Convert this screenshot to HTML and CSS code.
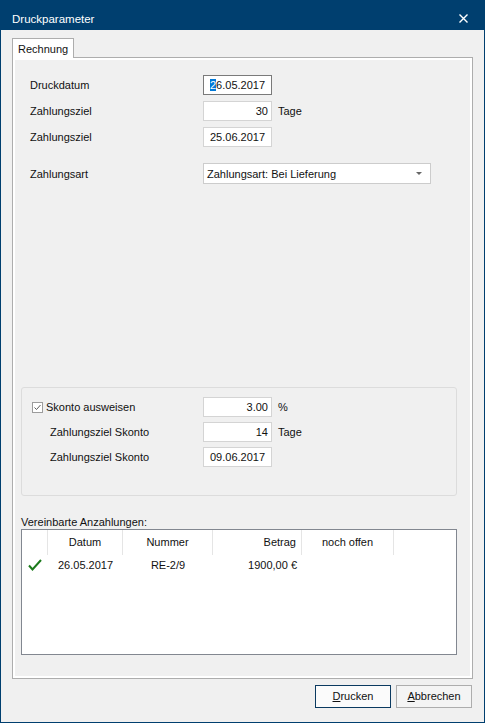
FILE: index.html
```html
<!DOCTYPE html>
<html lang="de">

<head>
    <meta charset="UTF-8">
    <meta name="viewport" content="width=device-width, initial-scale=1.0">
    <title>Druckparameter</title>
    <link rel="stylesheet" href="styles.css">
</head>

<body>
    <div class="window">
        <div class="titlebar">
            <span class="title">Druckparameter</span>
            <svg class="close" width="9" height="9" viewBox="0 0 9 9">
                <path d="M0.5 0.5 L8.5 8.5 M8.5 0.5 L0.5 8.5" stroke="#fff" stroke-width="1.4" fill="none" />
            </svg>
        </div>

        <div class="client">
            <div class="tabstrip">
                <div class="tab">Rechnung</div>
            </div>

            <div class="tabpage">
                <div class="form">
                    <span class="label">Druckdatum</span>
                    <div class="box date focus"><span class="sel">2</span>6.05.2017</div>
                    <span></span>

                    <span class="label">Zahlungsziel</span>
                    <div class="box num">30</div>
                    <span class="unit">Tage</span>

                    <span class="label">Zahlungsziel</span>
                    <div class="box date">25.06.2017</div>
                    <span></span>
                </div>

                <div class="combo-row">
                    <span class="label combo-label">Zahlungsart</span>
                    <div class="combo">
                        <span>Zahlungsart: Bei Lieferung</span>
                        <span class="arrow"></span>
                    </div>
                </div>

                <div class="spacer"></div>

                <div class="group">
                    <span class="check-label">
                        <svg class="checkbox" width="11" height="11" viewBox="0 0 11 11">
                            <rect x="0.5" y="0.5" width="10" height="10" fill="#fff" stroke="#9c9c9c" />
                            <path d="M2.5 5.5 L4.5 7.5 L8.5 3" stroke="#5c5c5c" stroke-width="1" fill="none" />
                        </svg>
                        Skonto ausweisen
                    </span>
                    <div class="box num">3.00</div>
                    <span class="unit">%</span>

                    <span class="label sub">Zahlungsziel Skonto</span>
                    <div class="box num">14</div>
                    <span class="unit">Tage</span>

                    <span class="label sub">Zahlungsziel Skonto</span>
                    <div class="box date">09.06.2017</div>
                    <span></span>
                </div>

                <div class="caption">Vereinbarte Anzahlungen:</div>

                <div class="listview">
                    <div class="lv-head">
                        <span class="col c0"></span>
                        <span class="col c1">Datum</span>
                        <span class="col c2">Nummer</span>
                        <span class="col c3">Betrag</span>
                        <span class="col c4">noch offen</span>
                    </div>
                    <div class="lv-row">
                        <span class="col c0">
                            <svg width="14" height="12" viewBox="0 0 14 12">
                                <path d="M1 6.5 L4.5 10.5 L13 1" stroke="#1b7a1b" stroke-width="2" fill="none" />
                            </svg>
                        </span>
                        <span class="col c1">26.05.2017</span>
                        <span class="col c2">RE-2/9</span>
                        <span class="col c3">1900,00 €</span>
                        <span class="col c4"></span>
                    </div>
                </div>
            </div>

            <div class="buttons">
                <div class="btn default"><u>D</u>rucken</div>
                <div class="btn"><u>A</u>bbrechen</div>
            </div>
        </div>
    </div>
</body>

</html>
```

FILE: styles.css
```css
html,
body {
    margin: 0;
    background: #f0f0f0;
    font-family: "Liberation Sans", Arial, sans-serif;
    font-size: 11px;
    color: #111;
}

.window {
    width: 485px;
    height: 723px;
    box-sizing: border-box;
    border: 1px solid #003f6f;
    border-top: 0;
    display: flex;
    flex-direction: column;
    background: #f0f0f0;
}

.titlebar {
    height: 30px;
    flex: none;
    box-sizing: border-box;
    padding: 8px 16px 0 11px;
    display: flex;
    align-items: center;
    background: #003f6f;
    color: #fff;
    font-size: 11.5px;
}

.close {
    margin-left: auto;
    margin-top: -1px;
}

.client {
    flex: 1;
    padding: 8px 11px 0 11px;
    display: flex;
    flex-direction: column;
}

.tabstrip {
    display: flex;
    height: 19px;
}

.tab {
    position: relative;
    z-index: 1;
    width: 62px;
    height: 20px;
    box-sizing: border-box;
    padding: 4px 0 0 5px;
    line-height: 13px;
    border: 1px solid #adadad;
    border-bottom: 0;
    background: #fff;
}

.tabpage {
    height: 622px;
    box-sizing: border-box;
    border: 1px solid #adadad;
    box-shadow: inset 0 0 0 2px #fff;
    padding: 17px 15px 23px 8px;
    display: flex;
    flex-direction: column;
}

/* obere Felder */
.form {
    display: grid;
    grid-template-columns: 173px 69px auto;
    grid-auto-rows: 20px;
    row-gap: 6px;
    align-items: center;
    padding-left: 9px;
}

.box {
    height: 20px;
    box-sizing: border-box;
    border: 1px solid #d4d4d4;
    background: #fff;
    line-height: 18px;
    padding: 0 3px;
    white-space: nowrap;
}

.box.focus {
    border-color: #7a7a7a;
}

.box.date {
    text-align: center;
}

.box.num {
    text-align: right;
}

.sel {
    background: #0078d7;
    color: #fff;
}

.unit {
    padding-left: 6px;
}

.combo-row {
    display: flex;
    align-items: center;
    margin-top: 16px;
    padding-left: 9px;
}

.combo-label {
    width: 173px;
}

.combo {
    width: 228px;
    height: 21px;
    box-sizing: border-box;
    border: 1px solid #cccccc;
    background: #fff;
    padding: 0 8px 0 3px;
    display: flex;
    align-items: center;
    justify-content: space-between;
}

.arrow {
    width: 0;
    height: 0;
    border-left: 3px solid transparent;
    border-right: 3px solid transparent;
    border-top: 3px solid #666;
}

.spacer {
    flex: 1;
}

/* Skonto */
.group {
    height: 109px;
    flex: none;
    box-sizing: border-box;
    border: 1px solid #dcdcdc;
    border-radius: 3px;
    padding: 9px 0 0 10px;
    display: grid;
    grid-template-columns: 171px 69px auto;
    grid-template-rows: 20px 20px 20px;
    row-gap: 5px;
    align-items: center;
}

.check-label {
    display: flex;
    align-items: center;
    gap: 3px;
}

.label.sub {
    padding-left: 18px;
}

.caption {
    margin-top: 19px;
    height: 14px;
    line-height: 14px;
}

/* Liste */
.listview {
    height: 126px;
    flex: none;
    box-sizing: border-box;
    border: 1px solid #828790;
    background: #fff;
}

.lv-head,
.lv-row {
    display: flex;
}

.lv-head {
    height: 25px;
    line-height: 25px;
}

.lv-head .col {
    border-right: 1px solid #e5e5e5;
    text-align: center;
}

.lv-row {
    height: 20px;
    line-height: 20px;
}

.col {
    box-sizing: border-box;
    white-space: nowrap;
}

.c0 {
    width: 26px;
    display: flex;
    align-items: center;
    justify-content: center;
}

.c1 {
    width: 75px;
    text-align: center;
}

.c2 {
    width: 90px;
    text-align: center;
}

.lv-head .c3,
.c3 {
    width: 89px;
    text-align: right;
    padding-right: 5px;
}

.c4 {
    width: 92px;
    text-align: center;
}

/* Knöpfe */
.buttons {
    display: flex;
    justify-content: flex-end;
    gap: 5px;
    margin-top: 6px;
    padding-right: 1px;
}

.btn {
    width: 76px;
    height: 23px;
    box-sizing: border-box;
    border: 1px solid #adadad;
    background: #f4f4f4;
    text-align: center;
    line-height: 21px;
}

.btn.default {
    border-color: #0b3a60;
    background: #fbfbfb;
}
```
